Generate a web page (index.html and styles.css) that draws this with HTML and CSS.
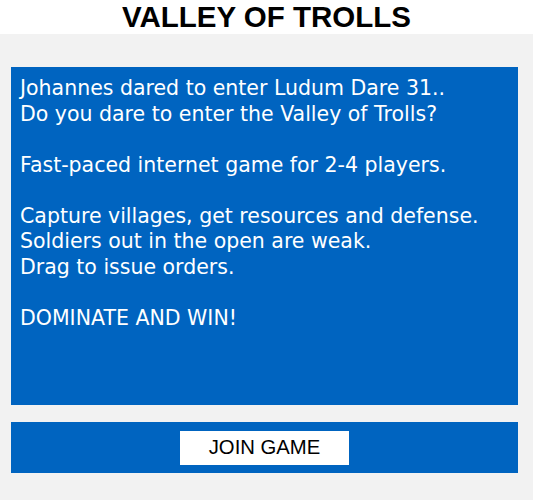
FILE: index.html
```html
<!DOCTYPE html>
<html>
<head>
<meta charset="utf-8">
<link rel="stylesheet" href="styles.css">
</head>
<body>
<header class="title-bar"><h1 class="title">VALLEY OF TROLLS</h1></header>
<main class="page">
  <section class="info">
    <p>Johannes dared to enter Ludum Dare 31..<br>Do you dare to enter the Valley of Trolls?</p>
    <p>Fast-paced internet game for 2-4 players.</p>
    <p>Capture villages, get resources and defense.<br>Soldiers out in the open are weak.<br>Drag to issue orders.</p>
    <p>DOMINATE AND WIN!</p>
  </section>
  <section class="join-bar">
    <button class="join-btn">JOIN GAME</button>
  </section>
</main>
</body>
</html>
```

FILE: styles.css
```css
html, body {
  margin: 0;
  padding: 0;
  background: #f2f2f2;
  height: 100%;
}
.title-bar {
  background: #ffffff;
  height: 34px;
  display: flex;
  align-items: center;
  justify-content: center;
}
.title {
  margin: 0;
  font-family: "Liberation Sans", Arial, sans-serif;
  font-weight: bold;
  font-size: 29.5px;
  line-height: 34px;
  color: #000;
}
.page {
  padding: 33px 15px 0 11px;
  display: flex;
  flex-direction: column;
  gap: 17px;
}
.info {
  background: #0064c0;
  height: 338px;
  box-sizing: border-box;
  padding: 9px 9px;
  color: #fff;
  font-family: "DejaVu Sans", Verdana, sans-serif;
  font-size: 20.5px;
  line-height: 25.5px;
}
.info p {
  margin: 0 0 25.5px 0;
}
.join-bar {
  background: #0064c0;
  height: 51px;
  display: flex;
  align-items: center;
  justify-content: center;
}
.join-btn {
  width: 169px;
  height: 34px;
  background: #fff;
  border: none;
  font-family: "Liberation Sans", Arial, sans-serif;
  font-size: 20.3px;
  color: #000;
  padding: 0;
}
```
